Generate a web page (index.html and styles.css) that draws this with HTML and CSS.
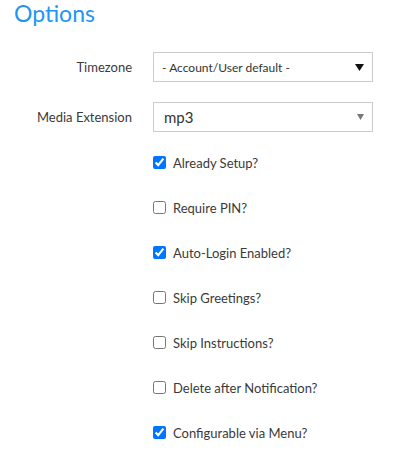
FILE: index.html
```html
<!DOCTYPE html>
<html lang="en">
<head>
    <meta charset="UTF-8">
    <meta name="viewport" content="width=device-width, initial-scale=1.0">
    <title>Options</title>
    <link rel="stylesheet" href="styles.css">
</head>
<body>
    <div class="options">
        <h2>Options</h2>

        <div class="form-row">
            <label for="timezone">Timezone</label>
            <div class="select-wrap">
                <select id="timezone" class="small">
                    <option>- Account/User default -</option>
                </select>
                <svg class="arrow" width="9" height="7" viewBox="0 0 9 7"><path d="M0 0h9L4.5 7z" fill="#111"/></svg>
            </div>
        </div>

        <div class="form-row">
            <label for="mediaExt">Media Extension</label>
            <div class="select-wrap">
                <select id="mediaExt">
                    <option>mp3</option>
                    <option>wav</option>
                </select>
                <svg class="arrow" width="7" height="6" viewBox="0 0 7 6"><path d="M0 0h7L3.5 6z" fill="#777"/></svg>
            </div>
        </div>

        <div class="check-list">
            <label class="check"><input type="checkbox" checked> Already Setup?</label>
            <label class="check"><input type="checkbox"> Require PIN?</label>
            <label class="check"><input type="checkbox" checked> Auto-Login Enabled?</label>
            <label class="check"><input type="checkbox"> Skip Greetings?</label>
            <label class="check"><input type="checkbox"> Skip Instructions?</label>
            <label class="check"><input type="checkbox"> Delete after Notification?</label>
            <label class="check"><input type="checkbox" checked> Configurable via Menu?</label>
        </div>
    </div>
</body>
</html>
```

FILE: styles.css
```css
body {
    margin: 0;
    padding: 0 14px;
    background-color: #fff;
    color: #3a3a3a;
    font-family: Lato, "Open Sans", sans-serif;
    font-size: 13px;
}

h2 {
    margin: 0;
    height: 52px;
    line-height: 26px;
    font-size: 23px;
    font-weight: 400;
    color: #2196f3;
}

.form-row {
    display: flex;
    align-items: center;
    height: 30px;
    margin-bottom: 20px;
}

.form-row label {
    width: 118px;
    padding-right: 21px;
    text-align: right;
}

.select-wrap {
    position: relative;
    width: 220px;
}

select {
    appearance: none;
    width: 100%;
    height: 30px;
    padding: 0 10px;
    border: 1px solid #ccc;
    border-radius: 0;
    background-color: #fff;
    color: #333;
    font-family: inherit;
    font-size: 15px;
}

select.small {
    padding-left: 8px;
    font-size: 12px;
}

.arrow {
    position: absolute;
    right: 9px;
    top: 12px;
    pointer-events: none;
}

.check-list {
    margin-top: -12px;
    padding-left: 139px;
}

.check {
    display: flex;
    align-items: center;
    height: 45px;
}

.check input {
    width: 13px;
    height: 13px;
    margin: 0 7px 0 0;
}
```
